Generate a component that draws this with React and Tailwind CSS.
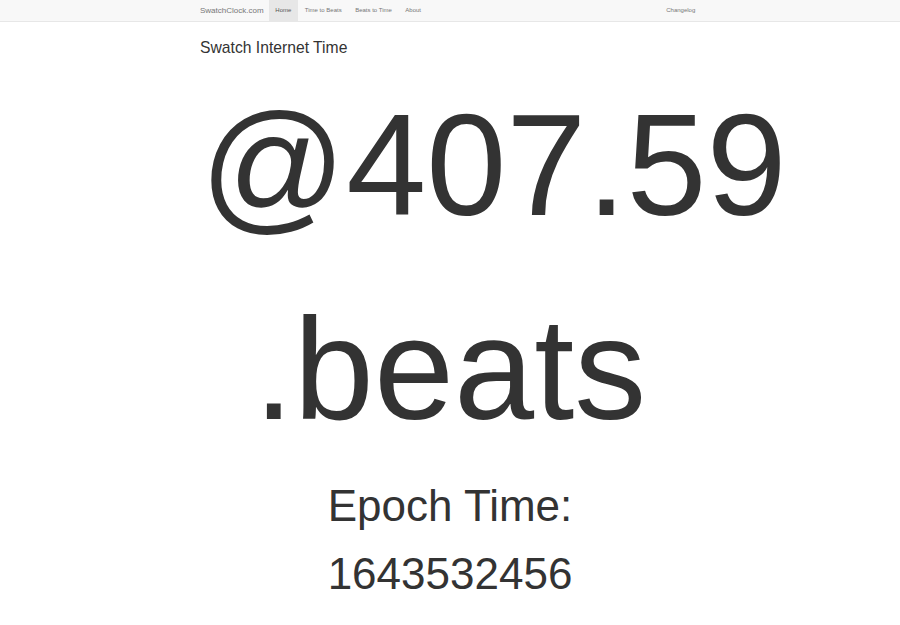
export default function App() {
  const links = ['Home', 'Time to Beats', 'Beats to Time', 'About'];

  return (
    <div className="min-h-[625px] bg-white text-[#333] font-['Liberation_Sans',Arial,sans-serif]">
      <nav className="h-[22px] bg-[#f8f8f8] border-b border-[#e7e7e7]">
        <div className="w-[500px] mx-auto h-full flex items-stretch">
          <a href="#" className="flex items-center text-[8px] text-[#777] pr-[5px]">SwatchClock.com</a>
          <ul className="flex items-stretch">
            {links.map((l, i) => (
              <li key={l}>
                <a
                  href="#"
                  className={
                    'h-full flex items-center px-[6.75px] text-[6px] ' +
                    (i === 0 ? 'bg-[#e7e7e7] text-[#555]' : 'text-[#777]')
                  }
                >
                  {l}
                </a>
              </li>
            ))}
          </ul>
          <a href="#" className="ml-auto mr-[-2px] flex items-center px-[6.75px] text-[6px] text-[#777]">Changelog</a>
        </div>
      </nav>

      <div className="w-[500px] mx-auto">
        <h1 className="mt-[17px] text-[15.7px] leading-[1.1]">Swatch Internet Time</h1>

        <div className="mt-[7.7px] text-[144px] leading-[204px]">
          <div className="whitespace-nowrap">@407.59</div>
          <div className="text-center">.beats</div>
        </div>

        <div className="text-center text-[44px] leading-[68px]">
          <div>Epoch Time:</div>
          <div>1643532456</div>
        </div>
      </div>
    </div>
  );
}
